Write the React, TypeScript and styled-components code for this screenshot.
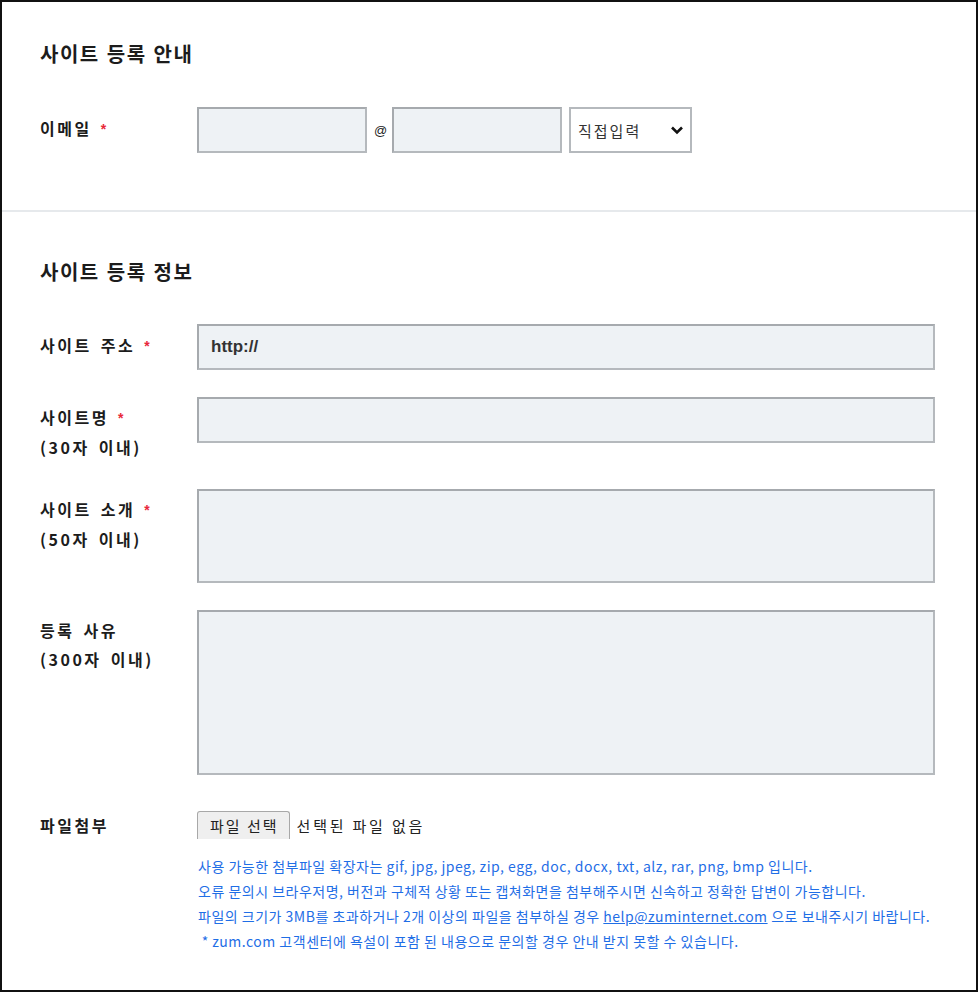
import * as React from 'react';
import styled, { createGlobalStyle } from 'styled-components';

const GlobalStyle = createGlobalStyle`
	html, body {
		margin: 0;
		padding: 0;
		background: #ffffff;
	}
	* {
		box-sizing: border-box;
	}
`;

const KR = `"Noto Sans CJK KR", "Noto Sans", sans-serif`;

const Page = styled.div`
	width: 978px;
	height: 992px;
	border: 2px solid #111111;
	background: #ffffff;
	font-family: ${KR};
	color: #1c1c1c;
`;

const Section = styled.section<{ $top: number; $bottom: number }>`
	padding: ${(p) => p.$top}px 41px ${(p) => p.$bottom}px 38px;
`;

const Divider = styled.hr`
	margin: 0;
	border: none;
	height: 2px;
	background: #e6e9ec;
`;

const Title = styled.h2`
	margin: 0;
	font-size: 20px;
	line-height: 24px;
	font-weight: 700;
	letter-spacing: 1.5px;
	word-spacing: 1px;
`;

const Form = styled.div<{ $top: number }>`
	display: flex;
	flex-direction: column;
	gap: 27px;
	margin-top: ${(p) => p.$top}px;
`;

const Row = styled.div<{ $top?: number }>`
	display: grid;
	grid-template-columns: 157px 1fr;
	align-items: start;
	margin-top: ${(p) => p.$top ?? 0}px;
`;

const Label = styled.div<{ $single?: boolean }>`
	padding-top: ${(p) => (p.$single ? 0 : 6)}px;
	font-size: 16px;
	line-height: ${(p) => (p.$single ? 42 : 29)}px;
	font-weight: 700;
	letter-spacing: 2.5px;
	word-spacing: 3px;
`;

const Required = styled.span`
	color: #e8283a;
	font-family: 'Liberation Sans', Arial, sans-serif;
	font-size: 14px;
	margin-left: 9px;
	vertical-align: 1px;
`;

const SubLabel = styled.div``;

const TextInput = styled.input<{ $width?: number }>`
	display: block;
	width: ${(p) => (p.$width ? `${p.$width}px` : '100%')};
	height: 46px;
	margin: 0;
	padding: 0 12px;
	border: 2px solid #b5b9bd;
	border-top-color: #a6aaae;
	border-left-color: #a6aaae;
	background: #eef2f5;
	font-family: 'Liberation Sans', Arial, sans-serif;
	font-size: 17px;
	font-weight: 700;
	color: #333333;
	outline: none;
`;

const TextArea = styled.textarea<{ $height: number }>`
	display: block;
	width: 100%;
	height: ${(p) => p.$height}px;
	margin: 0;
	padding: 10px 12px;
	border: 2px solid #b5b9bd;
	border-top-color: #a6aaae;
	border-left-color: #a6aaae;
	background: #eef2f5;
	resize: none;
	outline: none;
	font-family: ${KR};
	font-size: 14px;
`;

const EmailGroup = styled.div`
	display: flex;
	align-items: center;
	gap: 7px;
`;

const At = styled.span`
	width: 11px;
	font-family: 'Liberation Sans', Arial, sans-serif;
	font-size: 13px;
	color: #222222;
`;

const SelectWrap = styled.div`
	position: relative;
	width: 123px;
	height: 46px;
`;

const Select = styled.select`
	appearance: none;
	width: 100%;
	height: 100%;
	margin: 0;
	padding: 0 0 0 7px;
	border: 2px solid #b5b9bd;
	background: #ffffff;
	font-family: ${KR};
	font-size: 15px;
	letter-spacing: 2px;
	color: #333333;
	outline: none;
`;

const Chevron = styled.svg`
	position: absolute;
	right: 8px;
	top: 18px;
	pointer-events: none;
`;

const FileLine = styled.div`
	display: flex;
	align-items: center;
	gap: 7px;
	height: 28px;
	margin-top: 6px;
`;

const FileButton = styled.button`
	height: 28px;
	padding: 0 10px 0 12px;
	border: 1px solid #a8a8a8;
	border-bottom: none;
	border-radius: 3px 3px 0 0;
	background: #efefef;
	font-family: ${KR};
	font-size: 15px;
	letter-spacing: 2px;
	color: #222222;
`;

const FileStatus = styled.span`
	font-size: 15px;
	letter-spacing: 2.8px;
	color: #222222;
`;

const Help = styled.div`
	margin-top: 15px;
	padding-left: 1px;
	font-size: 14px;
	line-height: 25px;
	letter-spacing: 0.5px;
	color: #1f6ee6;
	white-space: nowrap;
`;

const HelpLink = styled.a`
	color: #1f6ee6;
	text-decoration: underline;
`;

const App: React.FC = () => {
	return (
		<>
			<GlobalStyle />
			<Page>
				<Section $top={40} $bottom={57}>
					<Title>사이트 등록 안내</Title>
					<Form $top={41}>
						<Row>
							<Label $single>
								이메일<Required>*</Required>
							</Label>
							<EmailGroup>
								<TextInput $width={170} />
								<At>@</At>
								<TextInput $width={170} />
								<SelectWrap>
									<Select defaultValue='direct'>
										<option value='direct'>직접입력</option>
									</Select>
									<Chevron width='14' height='10' viewBox='0 0 14 10'>
										<path
											d='M2 2.5 L7 7.5 L12 2.5'
											fill='none'
											stroke='#111'
											strokeWidth='2.6'
										/>
									</Chevron>
								</SelectWrap>
							</EmailGroup>
						</Row>
					</Form>
				</Section>
				<Divider />
				<Section $top={48} $bottom={0}>
					<Title>사이트 등록 정보</Title>
					<Form $top={40}>
						<Row>
							<Label $single>
								사이트 주소<Required>*</Required>
							</Label>
							<TextInput defaultValue='http://' />
						</Row>
						<Row>
							<Label>
								사이트명<Required>*</Required>
								<SubLabel>(30자 이내)</SubLabel>
							</Label>
							<TextInput />
						</Row>
						<Row>
							<Label>
								사이트 소개<Required>*</Required>
								<SubLabel>(50자 이내)</SubLabel>
							</Label>
							<TextArea $height={94} />
						</Row>
						<Row>
							<Label>
								등록 사유
								<SubLabel>(300자 이내)</SubLabel>
							</Label>
							<TextArea $height={165} />
						</Row>
					</Form>
					<Row $top={30}>
						<Label>파일첨부</Label>
						<div>
							<FileLine>
								<FileButton type='button'>파일 선택</FileButton>
								<FileStatus>선택된 파일 없음</FileStatus>
							</FileLine>
							<Help>
								<div>
									사용 가능한 첨부파일 확장자는 gif, jpg, jpeg, zip, egg, doc, docx,
									txt, alz, rar, png, bmp 입니다.
								</div>
								<div>
									오류 문의시 브라우저명, 버전과 구체적 상황 또는 캡쳐화면을
									첨부해주시면 신속하고 정확한 답변이 가능합니다.
								</div>
								<div>
									파일의 크기가 3MB를 초과하거나 2개 이상의 파일을 첨부하실 경우{' '}
									<HelpLink href='#'>help@zuminternet.com</HelpLink> 으로
									보내주시기 바랍니다.
								</div>
								<div>
									&nbsp;* zum.com 고객센터에 욕설이 포함 된 내용으로 문의할 경우
									안내 받지 못할 수 있습니다.
								</div>
							</Help>
						</div>
					</Row>
				</Section>
			</Page>
		</>
	);
};

export default App;
